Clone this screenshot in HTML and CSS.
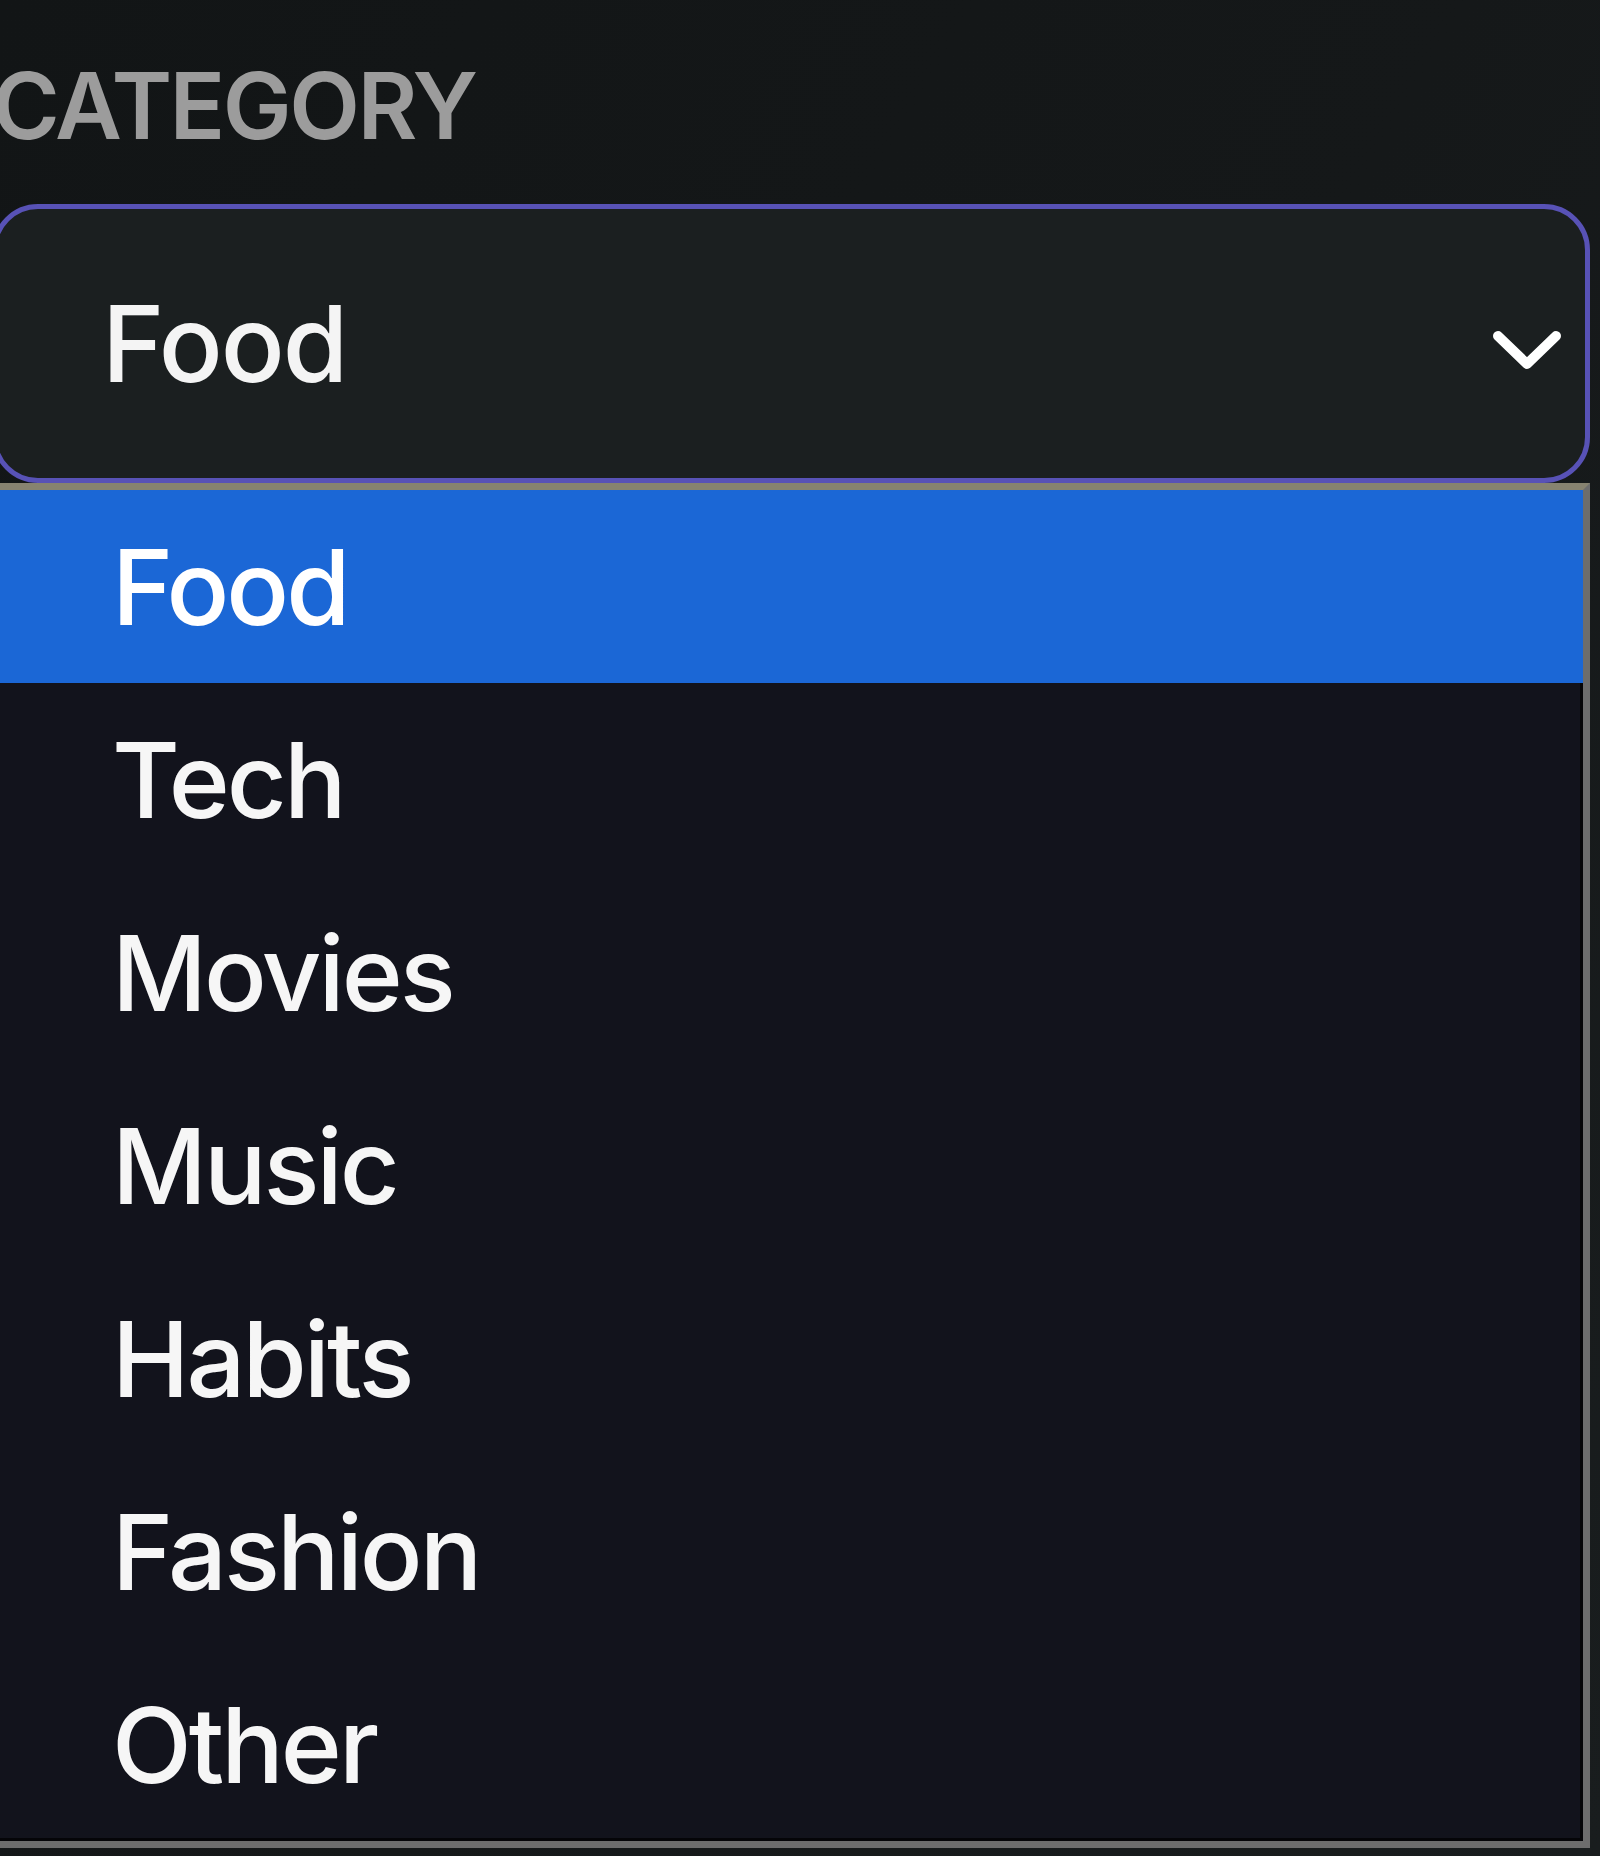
FILE: index.html
```html
<!DOCTYPE html>
<html lang="en">
<head>
<meta charset="utf-8">
<title>Category</title>
<link rel="stylesheet" href="styles.css">
</head>
<body>
<div class="field">
  <div class="label">Category</div>
  <div class="select">
    <span class="value">Food</span>
    <svg class="chevron" width="70" height="44" viewBox="0 0 70 44" aria-hidden="true">
      <path d="M6 8 L35 36 L64 8" fill="none" stroke="#ffffff" stroke-width="10" stroke-linecap="round" stroke-linejoin="round"/>
    </svg>
  </div>
  <ul class="listbox">
    <li class="option selected">Food</li>
    <li class="option">Tech</li>
    <li class="option">Movies</li>
    <li class="option">Music</li>
    <li class="option">Habits</li>
    <li class="option">Fashion</li>
    <li class="option">Other</li>
  </ul>
</div>
</body>
</html>
```

FILE: styles.css
```css
html, body {
  margin: 0;
  padding: 0;
}

body {
  width: 1600px;
  height: 1856px;
  overflow: hidden;
  background: linear-gradient(120deg, #121516 0%, #151819 55%, #191d1e 100%);
  font-family: "Inter", "Liberation Sans", sans-serif;
  color: #f2f2f2;
}

.field {
  margin-left: -8px;
  width: 1598px;
  padding-top: 60px;
}

.label {
  font-size: 92px;
  line-height: 92px;
  height: 92px;
  font-weight: 600;
  letter-spacing: -2.5px;
  text-transform: uppercase;
  color: #9c9c9c;
  margin-bottom: 52px;
}

.select {
  box-sizing: border-box;
  height: 279px;
  border: 5px solid #5852b6;
  border-radius: 46px;
  background: #1b1f20;
  display: flex;
  align-items: center;
  justify-content: space-between;
  padding-left: 105px;
  padding-right: 23px;
}

.value {
  font-size: 106px;
  line-height: 106px;
  font-weight: 500;
  letter-spacing: -2px;
  color: #f4f4f4;
}

.chevron {
  display: block;
  margin-top: 12px;
}

.listbox {
  list-style: none;
  margin: 0;
  padding: 0;
  border: 7px solid #6d6d6d;
  border-top-color: #878370;
  border-left-color: #6d6d6d;
  background: #12131c;
  box-shadow: inset -3px -3px 0 #050508;
}

.option {
  height: 193px;
  display: flex;
  align-items: center;
  padding-left: 113px;
  font-size: 104px;
  line-height: 104px;
  font-weight: 500;
  letter-spacing: -3px;
  color: #f6f6f6;
}

.option.selected {
  background: #1b67d6;
  color: #ffffff;
}
```
